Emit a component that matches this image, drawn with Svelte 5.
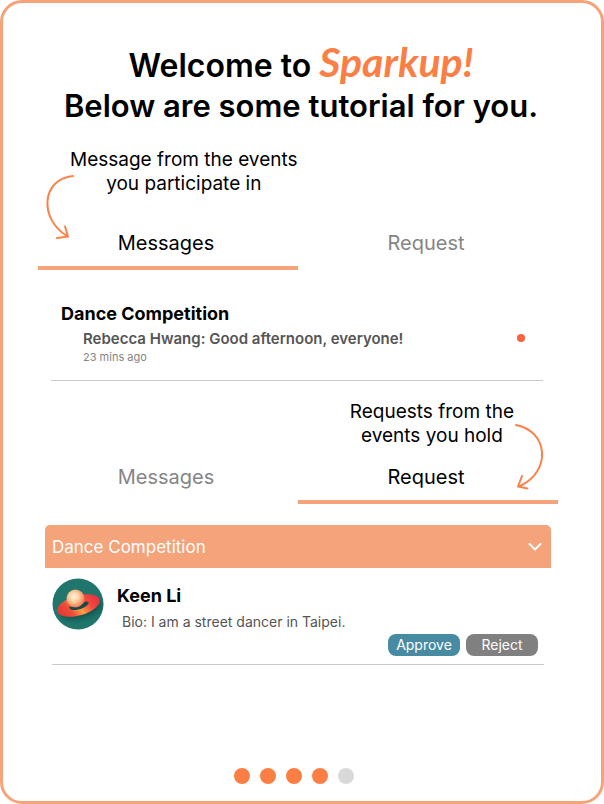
<script>
  const total = 5;
  let step = $state(4);
  let open = $state(true);
</script>

<main class="card">
  <h1>
    Welcome to <span class="brand">Sparkup!</span><br />
    <span class="intro">Below are some tutorial for you.</span>
  </h1>

  <section class="first">
    <p class="note left">
      Message from the events<br />you participate in
      <svg class="arrow" width="32" height="68" viewBox="0 0 32 68" aria-hidden="true">
        <path d="M29 3C-3 6-5 46 23 63M21 53.500L24 63.500L13 65" />
      </svg>
    </p>

    <div class="tabs">
      <button class="tab active" type="button">Messages</button>
      <button class="tab" type="button">Request</button>
    </div>

    <article class="message">
      <div>
        <h2>Dance Competition</h2>
        <p class="preview">Rebecca Hwang: Good afternoon, everyone!</p>
        <p class="time">23 mins ago</p>
      </div>
      <span class="unread"></span>
    </article>
  </section>

  <section class="second">
    <p class="note right">
      Requests from the<br />events you hold
      <svg class="arrow" width="32" height="68" viewBox="0 0 32 68" aria-hidden="true">
        <path d="M2 3C34 9 38 49 6 64M8 54L4 64.500L13.500 66.500" />
      </svg>
    </p>

    <div class="tabs">
      <button class="tab" type="button">Messages</button>
      <button class="tab active" type="button">Request</button>
    </div>

    <button class="event" type="button" aria-expanded={open} onclick={() => (open = !open)}>
      Dance Competition
      <svg width="14" height="8" viewBox="0 0 14 8" aria-hidden="true">
        <path d="M1.500 1L7 6.500L12.500 1" />
      </svg>
    </button>

    {#if open}
      <article class="request">
        <svg class="avatar" width="52" height="52" viewBox="0 0 52 52" aria-hidden="true">
          <defs>
            <linearGradient id="ring" x1="0" y1="0.500" x2="1" y2="0.300">
              <stop offset="0" stop-color="#e33535" />
              <stop offset="0.250" stop-color="#f04c38" />
              <stop offset="0.450" stop-color="#ffa044" />
              <stop offset="0.700" stop-color="#f5483e" />
              <stop offset="1" stop-color="#e2303f" />
            </linearGradient>
            <radialGradient id="ball" cx="0.420" cy="0.400" r="0.600">
              <stop offset="0" stop-color="#fff4df" />
              <stop offset="0.450" stop-color="#ffd0a0" />
              <stop offset="1" stop-color="#f4784f" />
            </radialGradient>
            <filter id="soft" x="-30%" y="-50%" width="160%" height="200%">
              <feGaussianBlur stdDeviation="2" />
            </filter>
            <clipPath id="disc"><circle cx="26" cy="26" r="25.500" /></clipPath>
          </defs>
          <circle cx="26" cy="26" r="25.500" fill="#20766c" />
          <g clip-path="url(#disc)">
            <ellipse cx="30" cy="32" rx="21" ry="9" transform="rotate(-16 30 32)" fill="#0d4943" opacity="0.600" filter="url(#soft)" />
            <ellipse cx="26.500" cy="27.500" rx="22" ry="10" transform="rotate(-16 26.500 27.500)" fill="url(#ring)" />
            <path d="M17 28.500C17 33 24 33 31 30C37 27 39 23 33 23.500C31 26 25 30 17 28.500Z" fill="#174b48" />
            <circle cx="23.500" cy="20.500" r="9" fill="url(#ball)" />
          </g>
        </svg>
        <div class="person">
          <h2>Keen Li</h2>
          <p>Bio: I am a street dancer in Taipei.</p>
          <div class="actions">
            <button class="approve" type="button">Approve</button>
            <button class="reject" type="button">Reject</button>
          </div>
        </div>
      </article>
    {/if}
  </section>

  <nav class="dots" aria-label="Tutorial steps">
    {#each Array(total) as _, i}
      <button
        type="button"
        class:done={i < step}
        aria-label={`Step ${i + 1}`}
        onclick={() => (step = i + 1)}
      ></button>
    {/each}
  </nav>
</main>

<style>
  :global(body) {
    background: #fff;
  }
  .card {
    box-sizing: border-box;
    display: flex;
    flex-direction: column;
    min-height: 100vh;
    padding: 43px 43px 17px 35px;
    border: 3px solid #f5a37a;
    border-radius: 22px;
    font-family: Inter, "Liberation Sans", sans-serif;
    color: #000;
  }
  h1,
  h2,
  p {
    margin: 0;
  }
  button {
    margin: 0;
    padding: 0;
    border: 0;
    background: none;
    font: inherit;
    cursor: pointer;
  }
  h1 {
    font-size: 32px;
    line-height: 40px;
    font-weight: 600;
    text-align: center;
    white-space: nowrap;
    margin-right: -6px;
  }
  .intro {
    font-size: 31px;
  }
  .brand {
    color: #fb7f45;
    font-family: Lato, sans-serif;
    font-size: 41px;
    line-height: 32px;
    font-style: italic;
    font-weight: 700;
  }
  .first {
    padding-top: 22px;
  }
  .second {
    padding-top: 19px;
  }
  .note {
    position: relative;
    width: fit-content;
    font-size: 19px;
    line-height: 24px;
    text-align: center;
  }
  .note.left {
    margin-left: 32px;
  }
  .note.right {
    margin-left: auto;
    margin-right: 44px;
  }
  .arrow {
    position: absolute;
    fill: none;
    stroke: #fb8349;
    stroke-width: 2;
    stroke-linecap: round;
    stroke-linejoin: round;
  }
  .left .arrow {
    right: calc(100% - 6px);
    top: 25px;
  }
  .right .arrow {
    left: 100%;
    top: 22px;
  }
  .tabs {
    display: grid;
    grid-template-columns: 1fr 1fr;
    margin-top: 35px;
  }
  .second .tabs {
    margin-top: 17px;
  }
  .tab {
    padding: 0 4px 11px 0;
    border-bottom: 4px solid transparent;
    font-size: 20px;
    line-height: 24px;
    color: #858585;
  }
  .tab.active {
    border-color: #f5a37a;
    color: #000;
  }
  .message {
    display: flex;
    align-items: center;
    justify-content: space-between;
    margin: 24px 15px 0 13px;
    padding: 8px 18px 15px 10px;
    border-bottom: 1px solid #c8c8c8;
  }
  h2 {
    font-size: 18px;
    line-height: 24px;
    font-weight: 700;
  }
  .preview {
    margin: 3px 0 0 22px;
    font-size: 15px;
    line-height: 20px;
    font-weight: 600;
    color: #555;
  }
  .time {
    margin-left: 22px;
    font-size: 11px;
    line-height: 16px;
    color: #858585;
  }
  .unread {
    width: 8px;
    height: 8px;
    margin-top: 8px;
    border-radius: 50%;
    background: #f9633b;
  }
  .event {
    display: flex;
    align-items: center;
    justify-content: space-between;
    width: calc(100% - 14px);
    height: 43px;
    margin: 21px 7px 0;
    padding: 0 9px 0 7px;
    border-radius: 5px 5px 0 0;
    background: #f5a37a;
    color: #fff;
    font-size: 17px;
  }
  .event svg {
    fill: none;
    stroke: #fff;
    stroke-width: 2;
    stroke-linecap: round;
    stroke-linejoin: round;
  }
  .request {
    display: flex;
    gap: 13px;
    margin: 0 14px;
    padding: 10px 6px 8px 0;
    border-bottom: 1px solid #c8c8c8;
  }
  .avatar {
    flex: none;
  }
  .person {
    flex: 1;
    padding-top: 6px;
  }
  .person p {
    margin: 4px 0 0 5px;
    font-size: 14px;
    line-height: 20px;
    color: #555;
  }
  .actions {
    display: flex;
    justify-content: flex-end;
    gap: 6px;
    margin-top: 2px;
  }
  .actions button {
    width: 72px;
    height: 22px;
    border-radius: 8px;
    color: #fff;
    font-size: 14px;
    line-height: 22px;
  }
  .actions .approve {
    background: #478ba2;
  }
  .actions .reject {
    background: #808080;
  }
  .dots {
    display: flex;
    justify-content: center;
    gap: 10px;
    margin-top: auto;
    padding: 24px 8px 0 0;
  }
  .dots button {
    width: 16px;
    height: 16px;
    border-radius: 50%;
    background: #d9d9d9;
  }
  .dots button.done {
    background: #fb7f45;
  }
</style>
